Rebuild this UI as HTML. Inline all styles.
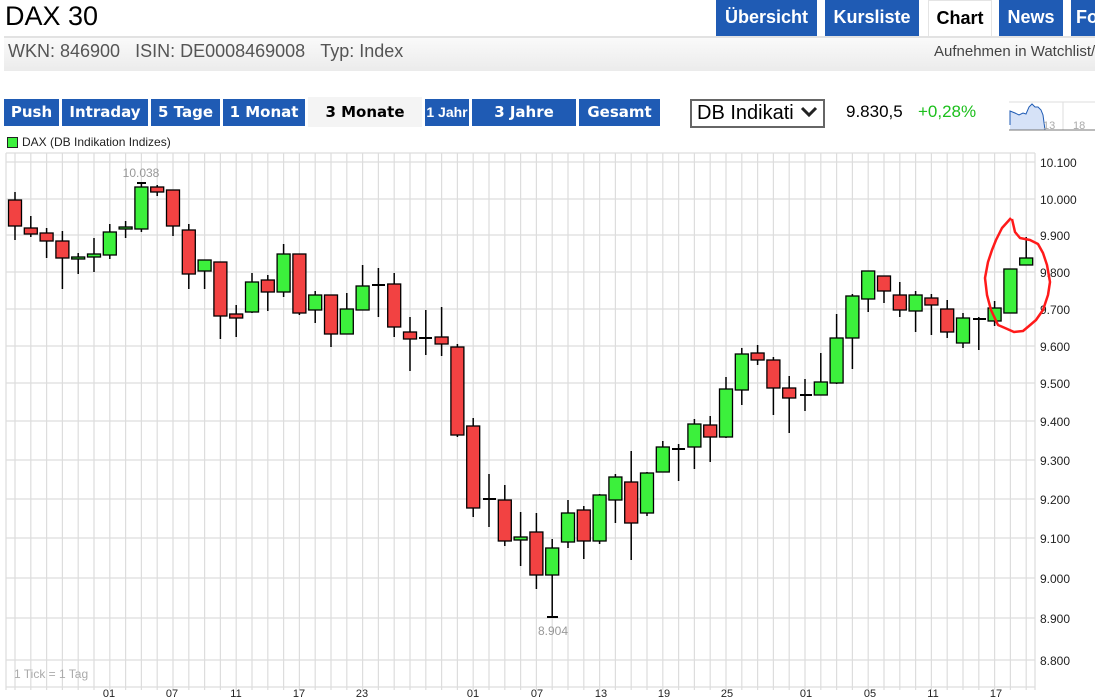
<!DOCTYPE html>
<html><head><meta charset="utf-8"><style>
body{margin:0;width:1095px;height:697px;overflow:hidden;background:#fff;font-family:"Liberation Sans",sans-serif;position:relative}
.a{position:absolute;white-space:nowrap}
.tab{position:absolute;top:0;height:36px;background:#1f5bb4;color:#fff;font-weight:bold;font-size:18px;line-height:34px;text-align:center}
.btn{position:absolute;top:99px;height:27px;background:#1f5bb4;color:#fff;font-weight:bold;font-size:15px;line-height:26px;text-align:center;white-space:nowrap;font-family:"DejaVu Sans",sans-serif;overflow:hidden}
</style></head><body>
<div class="a" style="left:5px;top:1px;font-size:27px;color:#000">DAX 30</div>
<div class="tab" style="left:716px;width:101px">Übersicht</div>
<div class="tab" style="left:825px;width:94px">Kursliste</div>
<div class="tab" style="left:928px;width:62px;background:#fff;color:#000;border:1px solid #e4e4e4;border-bottom:none;height:35px">Chart</div>
<div class="tab" style="left:999px;width:64px">News</div>
<div class="tab" style="left:1071px;width:40px;text-align:left;padding-left:5px">Fo</div>
<div class="a" style="left:4px;top:36px;width:1091px;height:33px;background:linear-gradient(#fafafa,#ebebeb);border-top:2px solid #e2e2e2"></div>
<div class="a" style="left:8px;top:41px;font-size:18px;color:#555">WKN: 846900&nbsp;&nbsp;&nbsp;ISIN: DE0008469008&nbsp;&nbsp;&nbsp;Typ: Index</div>
<div class="a" style="left:934px;top:43px;font-size:15px;color:#444">Aufnehmen in Watchlist/</div>
<div class="btn" style="left:4px;width:55px">Push</div>
<div class="btn" style="left:62px;width:86px">Intraday</div>
<div class="btn" style="left:151px;width:69px">5 Tage</div>
<div class="btn" style="left:223px;width:82px">1 Monat</div>
<div class="btn" style="left:308px;width:114px;background:#f4f4f4;color:#000;top:97px;height:30px;line-height:30px">3 Monate</div>
<div class="btn" style="left:425px;width:44px;font-family:'Liberation Sans',sans-serif;font-size:14px">1 Jahr</div>
<div class="btn" style="left:472px;width:104px">3 Jahre</div>
<div class="btn" style="left:579px;width:81px">Gesamt</div>
<div class="a" style="left:690px;top:99px;height:25px;border:2px solid #666;font-size:20px;line-height:25px;padding-left:5px;width:126px">DB Indikati</div>
<svg class="a" style="left:800px;top:105px" width="18" height="14"><path d="M2 3 L9 10 L16 3" fill="none" stroke="#222" stroke-width="3"/></svg>
<div class="a" style="left:846px;top:102px;font-size:17px;color:#000">9.830,5</div>
<div class="a" style="left:918px;top:102px;font-size:17px;color:#1cbf1c">+0,28%</div>
<svg class="a" style="left:1009px;top:100px" width="86" height="33">
<path d="M0 2H86M54 2V30" stroke="#ddd" fill="none"/>
<path d="M1 25 V11 L6 13 L10 15 L14 13 L17 14 L20 7 L23 4 L26 7 L29 7 L32 10 L34 15 L36 30 L1 30Z" fill="#d6e2f7"/>
<path d="M1 25 V11 L6 13 L10 15 L14 13 L17 14 L20 7 L23 4 L26 7 L29 7 L32 10 L34 15 L36 30" fill="none" stroke="#1f5bb4"/>
<path d="M0 30H86" stroke="#777"/>
<text x="34" y="29" font-size="11" fill="#aaa">13</text><text x="64" y="29" font-size="11" fill="#aaa">18</text>
</svg>
<div class="a" style="left:7px;top:137px;width:9px;height:9px;background:#3cf03c;border:1px solid #222"></div>
<div class="a" style="left:22px;top:135px;font-size:12px;color:#222">DAX (DB Indikation Indizes)</div>
<svg class="a" style="left:0;top:150px" width="1095" height="547">
<g stroke="#ddd" stroke-width="1.2" fill="none">
<path d="M6 3H1035M6 12H1035M6 49H1035M6 85H1035M6 122H1035M6 159H1035M6 196H1035M6 233H1035M6 271H1035M6 310H1035M6 349H1035M6 388H1035M6 428H1035M6 468H1035M6 510H1035M6 537H1035"/>
<path d="M6 3V540M15 3V540M30.8 3V540M46.6 3V540M62.4 3V540M78.2 3V540M94 3V540M109.8 3V540M125.6 3V540M141.4 3V540M157.2 3V540M173 3V540M188.8 3V540M204.6 3V540M220.4 3V540M236.2 3V540M252 3V540M267.8 3V540M283.6 3V540M299.4 3V540M315.2 3V540M331 3V540M346.8 3V540M362.6 3V540M378.4 3V540M394.2 3V540M410 3V540M425.8 3V540M441.6 3V540M457.4 3V540M473.2 3V540M489 3V540M504.8 3V540M520.6 3V540M536.4 3V540M552.2 3V540M568 3V540M583.8 3V540M599.6 3V540M615.4 3V540M631.2 3V540M647 3V540M662.8 3V540M678.6 3V540M694.4 3V540M710.2 3V540M726 3V540M741.8 3V540M757.6 3V540M773.4 3V540M789.2 3V540M805 3V540M820.8 3V540M836.6 3V540M852.4 3V540M868.2 3V540M884 3V540M899.8 3V540M915.6 3V540M931.4 3V540M947.2 3V540M963 3V540M978.8 3V540M994.6 3V540M1010.4 3V540M1026.2 3V540M1035 3V540"/>
</g>
<g font-size="12" fill="#222">
<text x="1040" y="17">10.100</text><text x="1040" y="54">10.000</text><text x="1040" y="90">9.900</text><text x="1040" y="127">9.800</text><text x="1040" y="164">9.700</text><text x="1040" y="201">9.600</text><text x="1040" y="238">9.500</text><text x="1040" y="276">9.400</text><text x="1040" y="315">9.300</text><text x="1040" y="354">9.200</text><text x="1040" y="393">9.100</text><text x="1040" y="433">9.000</text><text x="1040" y="473">8.900</text><text x="1040" y="515">8.800</text>
</g>
<g font-size="11" fill="#222" text-anchor="middle">
<text x="109" y="547">01</text><text x="172" y="547">07</text><text x="236" y="547">11</text><text x="299" y="547">17</text><text x="362" y="547">23</text><text x="473" y="547">01</text><text x="537" y="547">07</text><text x="601" y="547">13</text><text x="664" y="547">19</text><text x="727" y="547">25</text><text x="806" y="547">01</text><text x="870" y="547">05</text><text x="933" y="547">11</text><text x="996" y="547">17</text>
</g>
<text x="14" y="528" font-size="12" fill="#aaa">1 Tick = 1 Tag</text>
<text x="141" y="27" font-size="12" fill="#999" text-anchor="middle">10.038</text>
<text x="553" y="485" font-size="12" fill="#999" text-anchor="middle">8.904</text>
</svg>
<svg class="a" style="left:0;top:0" width="1095" height="697">
<g stroke="#000" stroke-width="1.5">
<path d="M15 192V240M30.8 216V237M46.6 228V258M62.4 231V289M78.2 253V274M94 238V272M109.8 224V259M125.6 221V238M141.4 183V232M157.2 185V196M173 190V236M188.8 224V289M204.6 260V289M220.4 262V339M236.2 305V337M252 273V313M267.8 275V311M283.6 244V297M299.4 254V315M315.2 291V323M331 295V347M346.8 293V334M362.6 265V310M378.4 268V317M394.2 273V337M410 317V371M425.8 310V355M441.6 307V356M457.4 344V437M473.2 418V517M489 474V527M504.8 485V546M520.6 512V566M536.4 513V589M552.2 539V617M568 500V548M583.8 506V559M599.6 494V544M615.4 474V523M631.2 451V560M647 472V516M662.8 441V472M678.6 444V481M694.4 419V469M710.2 416V462M726 377V438M741.8 348V405M757.6 345V365M773.4 357V415M789.2 376V433M805 379V411M820.8 353V395M836.6 314V384M852.4 294V369M868.2 271V312M884 276V303M899.8 282V317M915.6 291V332M931.4 294V335M947.2 300V338M963 313V348M978.8 317V350M994.6 301V326M1010.4 269V313M1026.2 237V265"/>
<path stroke-width="2" d="M137 183H146M547 617H558M72 258H85M119 228H132M372 285H385M419 338H432M483 499H496M515 538H527M672 449H685M800 395H812M973 319H986"/>
</g>
<g stroke="#000" stroke-width="1.3">
<g fill="#f24242">
<rect x="8.5" y="200" width="13" height="26"/><rect x="24.3" y="228" width="13" height="6"/><rect x="40.1" y="233" width="13" height="8"/><rect x="55.9" y="241" width="13" height="17"/><rect x="150.7" y="187" width="13" height="5"/><rect x="166.5" y="190" width="13" height="36"/><rect x="182.3" y="230" width="13" height="44"/><rect x="213.9" y="262" width="13" height="54"/><rect x="229.7" y="314" width="13" height="4"/><rect x="261.3" y="280" width="13" height="12"/><rect x="292.9" y="254" width="13" height="59"/><rect x="324.5" y="295" width="13" height="39"/><rect x="387.7" y="284" width="13" height="43"/><rect x="403.5" y="332" width="13" height="7"/><rect x="435.1" y="337" width="13" height="7"/><rect x="450.9" y="347" width="13" height="88"/><rect x="466.7" y="426" width="13" height="82"/><rect x="498.3" y="500" width="13" height="41"/><rect x="529.9" y="532" width="13" height="43"/><rect x="577.3" y="510" width="13" height="31"/><rect x="624.7" y="482" width="13" height="41"/><rect x="703.7" y="425" width="13" height="12"/><rect x="751.1" y="353" width="13" height="7"/><rect x="766.9" y="360" width="13" height="28"/><rect x="782.7" y="388" width="13" height="10"/><rect x="877.5" y="276" width="13" height="15"/><rect x="893.3" y="295" width="13" height="15"/><rect x="924.9" y="298" width="13" height="7"/><rect x="940.7" y="309" width="13" height="23"/>
</g>
<g fill="#3cf03c">
<rect x="71.7" y="257" width="13" height="2"/><rect x="87.5" y="254" width="13" height="3"/><rect x="103.3" y="232" width="13" height="23"/><rect x="119.1" y="227" width="13" height="2"/><rect x="134.9" y="187" width="13" height="42"/><rect x="198.1" y="260" width="13" height="11"/><rect x="245.5" y="282" width="13" height="30"/><rect x="277.1" y="254" width="13" height="38"/><rect x="308.7" y="295" width="13" height="15"/><rect x="340.3" y="309" width="13" height="25"/><rect x="356.1" y="286" width="13" height="24"/><rect x="514.1" y="537" width="13" height="3"/><rect x="545.7" y="548" width="13" height="27"/><rect x="561.5" y="513" width="13" height="29"/><rect x="593.1" y="495" width="13" height="46"/><rect x="608.9" y="477" width="13" height="23"/><rect x="640.5" y="473" width="13" height="40"/><rect x="656.3" y="447" width="13" height="25"/><rect x="687.9" y="424" width="13" height="23"/><rect x="719.5" y="389" width="13" height="48"/><rect x="735.3" y="354" width="13" height="36"/><rect x="814.3" y="382" width="13" height="13"/><rect x="830.1" y="338" width="13" height="45"/><rect x="845.9" y="296" width="13" height="42"/><rect x="861.7" y="271" width="13" height="28"/><rect x="909.1" y="295" width="13" height="16"/><rect x="956.5" y="318" width="13" height="25"/><rect x="988.1" y="308" width="13" height="13"/><rect x="1003.9" y="269" width="13" height="44"/><rect x="1019.7" y="258" width="13" height="7"/>
</g>
</g>
<path d="M1011 218 L1002 228 L996 240 L992 250 L988 262 L985 278 L987 295 L991 310 L998 325 L1005 328 L1014 332 L1023 331 L1029 326 L1036 320 L1043 310 L1048 295 L1050 282 L1047 265 L1043 253 L1038 244 L1030 240 L1020 238 L1015 232 L1012 219" fill="none" stroke="#ff1a1a" stroke-width="2.5" stroke-linejoin="round"/>
</svg>
</body></html>
